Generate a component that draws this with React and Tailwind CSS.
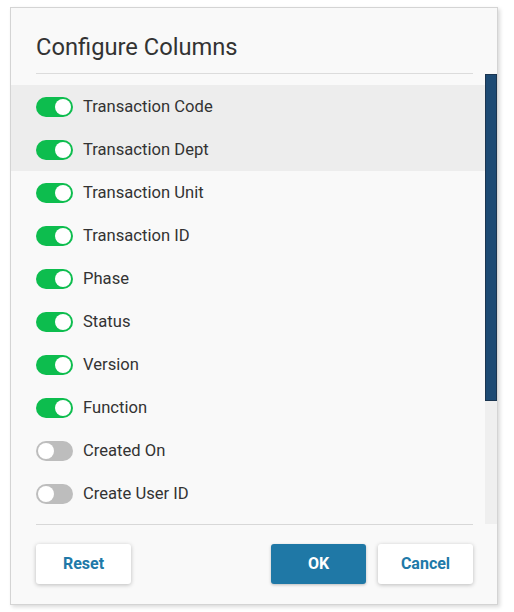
import React from "react";

const items = [
  { label: "Transaction Code", on: true, hl: true },
  { label: "Transaction Dept", on: true, hl: true },
  { label: "Transaction Unit", on: true },
  { label: "Transaction ID", on: true },
  { label: "Phase", on: true },
  { label: "Status", on: true },
  { label: "Version", on: true },
  { label: "Function", on: true },
  { label: "Created On", on: false },
  { label: "Create User ID", on: false },
];

function Toggle({ on }) {
  return (
    <div
      className={
        "flex h-[20px] w-[37px] shrink-0 items-center rounded-full px-[2px] " +
        (on ? "justify-end bg-[#0dbd4e]" : "justify-start bg-[#bdbdbd]")
      }
    >
      <div className="h-[16px] w-[16px] rounded-full bg-white" />
    </div>
  );
}

export default function App() {
  return (
    <div
      className="h-[612px] w-[514px] bg-white pl-[10px] pt-[7px]"
      style={{ fontFamily: "Roboto, 'Noto Sans', sans-serif" }}
    >
      <div className="flex h-[598px] w-[488px] flex-col border border-[#d4d4d4] bg-[#f9f9f9] shadow-[2px_2px_4px_rgba(0,0,0,0.15)]">
        <div className="px-[25px] pt-[24px]">
          <div className="text-[23.7px] leading-[30px] text-[#333333]">Configure Columns</div>
        </div>
        <div className="ml-[25px] mr-[24px] mt-[11px] h-px bg-[#dcdcdc]" />
        <div className="flex h-[450px]">
          <div className="flex-1 pt-[11px]">
            {items.map((it) => (
              <div
                key={it.label}
                className={
                  "flex h-[43px] items-center gap-[10px] pl-[25px] " +
                  (it.hl ? "bg-[#ededed]" : "")
                }
              >
                <Toggle on={it.on} />
                <span className="mt-[2px] text-[16.6px] text-[#333333]">{it.label}</span>
              </div>
            ))}
          </div>
          <div className="flex w-[12px] flex-col bg-[#efefef]">
            <div className="h-[327px] border border-[#1b3550] bg-[#1d4a73]" />
          </div>
        </div>
        <div className="ml-[25px] mr-[24px] h-px bg-[#d8d8d8]" />
        <div className="flex items-center pl-[25px] pr-[24px] pt-[19px]">
          <button className="h-[40px] w-[95px] rounded-[3px] bg-white text-[16px] font-bold text-[#2079a8] shadow-[0_1px_4px_rgba(0,0,0,0.25)]">
            Reset
          </button>
          <div className="flex-1" />
          <button className="h-[40px] w-[95px] rounded-[3px] bg-[#1f78a6] text-[16px] font-bold text-white shadow-[0_1px_3px_rgba(0,0,0,0.25)]">
            OK
          </button>
          <button className="ml-[12px] h-[40px] w-[95px] rounded-[3px] bg-white text-[16px] font-bold text-[#2079a8] shadow-[0_1px_4px_rgba(0,0,0,0.25)]">
            Cancel
          </button>
        </div>
      </div>
    </div>
  );
}
